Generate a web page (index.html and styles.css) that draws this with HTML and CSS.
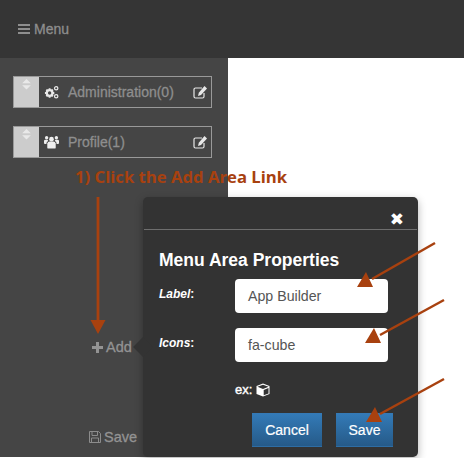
FILE: index.html
```html
<!DOCTYPE html>
<html lang="en">
<head>
<meta charset="utf-8">
<title>Menu</title>
<link rel="stylesheet" href="styles.css">
</head>
<body>
<header class="topbar">
  <svg class="bars" viewBox="0 0 12 10"><path d="M0 0h12v2H0zM0 4h12v2H0zM0 8h12v2H0z"/></svg>
  <span>Menu</span>
</header>
<main class="stage">
  <aside class="sidebar">
    <div class="row">
      <div class="handle">
        <svg viewBox="0 0 11 14"><path d="M5.500 0 11 5.500H0zM0 8h11l-5.500 5.500z"/></svg>
      </div>
      <svg class="row-icon" viewBox="0 0 16 14"><g fill="none" stroke="#e8e8e8"><circle cx="6" cy="8" r="3" stroke-width="2.400"/><path d="M6 3v1.500M6 11.500V13M1 8h1.500M9.500 8H11M2.500 4.500l1 1M8.500 10.500l1 1M2.500 11.500l1-1M8.500 5.500l1-1" stroke-width="2"/><circle cx="13" cy="3" r="1.800" stroke-width="1.300"/><circle cx="13" cy="11.500" r="1.800" stroke-width="1.300"/></g></svg>
      <span class="row-label">Administration(0)</span>
      <svg class="edit" viewBox="0 0 15 14"><path d="M11 8v3.500a1.500 1.500 0 0 1-1.500 1.500h-7A1.500 1.500 0 0 1 1 11.500v-7A1.500 1.500 0 0 1 2.500 3H9" fill="none" stroke="#e8e8e8" stroke-width="1.200"/><path d="M11.500 1 14 3.500 8 10l-3 1 .8-3.200z" fill="#e8e8e8"/></svg>
    </div>
    <div class="row">
      <div class="handle">
        <svg viewBox="0 0 11 14"><path d="M5.500 0 11 5.500H0zM0 8h11l-5.500 5.500z"/></svg>
      </div>
      <svg class="row-icon" viewBox="0 0 16 14"><g fill="#eee"><circle cx="8" cy="4" r="2.500"/><circle cx="2.800" cy="2.500" r="1.800"/><circle cx="13.200" cy="2.500" r="1.800"/><path d="M3.500 8.500Q4 6.500 6 6.500h4q2 0 2.500 2V13q0 1-1.500 1H5q-1.500 0-1.500-1z"/><path d="M0 6q0-1.500 1.500-1.500h2.300L4.500 6Q2.500 6.500 2.500 9H1Q0 9 0 8zM16 6q0-1.500-1.500-1.500h-2.300L11.500 6q2 .5 2 3H15q1 0 1-1z"/></g></svg>
      <span class="row-label">Profile(1)</span>
      <svg class="edit" viewBox="0 0 15 14"><path d="M11 8v3.500a1.500 1.500 0 0 1-1.500 1.500h-7A1.500 1.500 0 0 1 1 11.500v-7A1.500 1.500 0 0 1 2.500 3H9" fill="none" stroke="#e8e8e8" stroke-width="1.200"/><path d="M11.500 1 14 3.500 8 10l-3 1 .8-3.200z" fill="#e8e8e8"/></svg>
    </div>
    <div class="add-link">
      <svg class="plus" viewBox="0 0 11 11"><path d="M4 0h3v4h4v3H7v4H4V7H0V4h4z"/></svg>
      <span>Add</span>
    </div>
    <div class="save-link">
      <svg class="floppy" viewBox="0 0 12 12"><path d="M1 .5h8.500l2 2v9H.500V.500zM3 1v3.500h5.500V1M2.500 11.500V7h7v4.500" fill="none" stroke="#8c8c8c"/></svg>
      <span>Save</span>
    </div>
  </aside>
</main>

<section class="modal">
  <span class="pointer"></span>
  <div class="modal-head"><span class="close">✖</span></div>
  <div class="modal-body">
    <h2>Menu Area Properties</h2>
    <div class="field">
      <label><em>Label</em>:</label>
      <div class="input">App Builder</div>
    </div>
    <div class="field">
      <label><em>Icons</em>:</label>
      <div class="input">fa-cube</div>
    </div>
    <div class="example">
      <span>ex:</span>
      <svg viewBox="0 0 14 14"><path d="M7 .500 13.500 3v8L7 13.500.500 11V3z" fill="#fff"/><path d="M1.500 3.800 7 1.700l5.500 2.100L7 6zM7.700 7v5.300l4.800-1.900V5.100z" fill="#333"/></svg>
    </div>
    <div class="actions">
      <button class="btn cancel">Cancel</button>
      <button class="btn">Save</button>
    </div>
  </div>
</section>

<p class="note">1) Click the Add Area Link</p>
<svg class="arrows" viewBox="0 0 464 458">
  <g fill="#a8410f" stroke="#a8410f">
    <path d="M98 197V322" stroke-width="2.800"/>
    <path d="M90.500 320h15L98 334z" stroke="none"/>
    <path d="M435 243 372 279" stroke-width="2.500"/>
    <path d="M357 287 366 272 373 287z" stroke="none"/>
    <path d="M444 300 380 335" stroke-width="2.500"/>
    <path d="M365 343 374 328 381 343z" stroke="none"/>
    <path d="M444 379 380 414" stroke-width="2.500"/>
    <path d="M366 422 375 407 382 422z" stroke="none"/>
  </g>
</svg>
</body>
</html>
```
FILE: styles.css
```css
html, body {
  margin: 0;
  padding: 0;
  background: #fff;
  width: 464px;
  height: 458px;
  overflow: hidden;
  font-family: "Liberation Sans", Arial, sans-serif;
}
body { position: relative; }

.topbar {
  height: 58px;
  box-sizing: border-box;
  background: #353535;
  padding-left: 18px;
  display: flex;
  align-items: center;
  gap: 4px;
  color: #8e8e8e;
  font-size: 14px;
  font-weight: 400;
  -webkit-text-stroke: 0.3px #8e8e8e;
}
.bars { width: 12px; height: 10px; fill: #8e8e8e; }

.stage { display: flex; }
.sidebar {
  width: 228px;
  height: 399px;
  box-sizing: border-box;
  background: #454545;
  padding: 18px 16px 0 13px;
  display: flex;
  flex-direction: column;
  gap: 18px;
}
.row {
  height: 32px;
  box-sizing: border-box;
  border: 1px solid #999;
  display: flex;
  align-items: center;
}
.handle {
  width: 25px;
  height: 30px;
  background: #ccc;
  display: flex;
  justify-content: center;
  padding-top: 2px;
  box-sizing: border-box;
  flex: none;
}
.handle svg { width: 9px; height: 11px; fill: #e9e9e9; }
.row-icon { width: 15px; height: 14px; margin-left: 5px; flex: none; }
.row-label {
  margin-left: 9px;
  color: #8e8e8e;
  font-size: 14px;
  -webkit-text-stroke: 0.3px #8e8e8e;
  flex: 1;
}
.edit { width: 15px; height: 14px; margin-right: 3px; flex: none; }

.add-link, .save-link {
  display: flex;
  align-items: center;
  gap: 3px;
  color: #939393;
  font-size: 14.5px;
  -webkit-text-stroke: 0.3px #939393;
}
.add-link { margin: 163px 0 0 79px; height: 16px; }
.save-link { margin: 56px 0 0 76px; height: 16px; }
.plus { width: 11px; height: 11px; fill: #939393; }
.floppy { width: 12px; height: 12px; }

.modal {
  position: absolute;
  left: 143px;
  top: 197px;
  width: 275px;
  height: 260px;
  box-sizing: border-box;
  background: #333;
  border-radius: 5px;
  box-shadow: 0 3px 8px rgba(0,0,0,.3);
  color: #fff;
}
.pointer {
  position: absolute;
  left: -7px;
  top: 143px;
  width: 14px;
  height: 14px;
  background: #333;
  transform: rotate(45deg);
}
.modal-head {
  height: 33px;
  margin: 0 1px;
  box-sizing: border-box;
  border-bottom: 1px solid #6e6e6e;
  display: flex;
  justify-content: flex-end;
  padding: 12px 13px 0 0;
}
.close { font-size: 17px; line-height: 20px; font-family: "DejaVu Sans", sans-serif; font-weight: 700; }
.modal-body { padding: 20px 0 0 16px; position: relative; }
h2 {
  margin: 0 0 9px;
  font-size: 17.5px;
  line-height: 20px;
  font-weight: 700;
}
.field {
  display: flex;
  align-items: flex-start;
  margin-bottom: 15px;
}
.field label {
  width: 76px;
  font-size: 12px;
  font-weight: 700;
  line-height: 31px;
}
.input {
  width: 153px;
  height: 34px;
  box-sizing: border-box;
  background: #fff;
  border-radius: 4px;
  color: #555;
  font-size: 14.2px;
  line-height: 34px;
  padding-left: 13px;
}
.example {
  margin: 20px 0 0 76px;
  display: flex;
  align-items: center;
  gap: 4px;
  font-size: 13px;
  font-weight: 400;
  -webkit-text-stroke: 0.4px #fff;
}
.example svg { width: 14px; height: 14px; }
.actions {
  display: flex;
  gap: 14px;
  margin: 16px 0 0 93px;
}
.btn {
  height: 34px;
  width: 57px;
  padding: 0;
  border: 0;
  border-top: 1px solid #3579b5;
  border-bottom: 1px solid #2e6da4;
  background: linear-gradient(#337ab7, #265a88);
  color: #fff;
  font: 400 14px "Liberation Sans", Arial, sans-serif;
  -webkit-text-stroke: 0.2px #fff;
}
.cancel { width: 70px; }

.note {
  position: absolute;
  left: 75px;
  top: 166px;
  margin: 0;
  font-family: "Open Sans", sans-serif;
  font-size: 16.7px;
  line-height: 22px;
  font-weight: 700;
  color: #a8410f;
  white-space: nowrap;
}
.arrows {
  position: absolute;
  left: 0;
  top: 0;
  width: 464px;
  height: 458px;
  pointer-events: none;
}
```
